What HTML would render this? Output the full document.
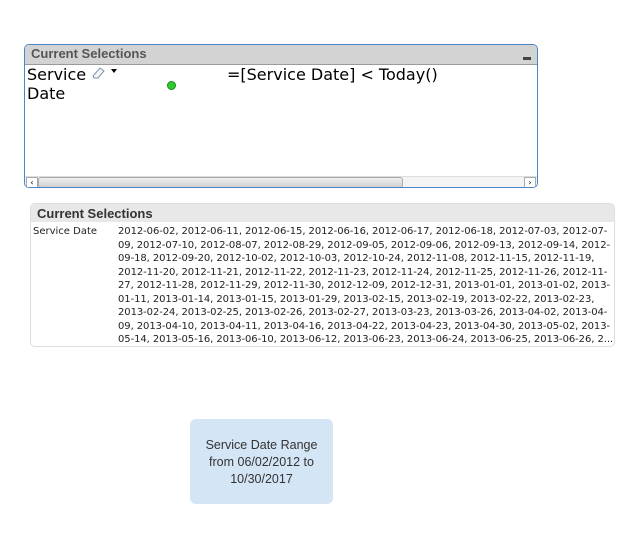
<!DOCTYPE html>
<html><head><meta charset="utf-8"><style>
body{margin:0;width:620px;height:543px;background:#fff;position:relative;font-family:"DejaVu Sans","Liberation Sans",sans-serif;overflow:hidden}
.p1{position:absolute;left:24px;top:44px;width:512px;height:142px;border:1px solid #4a86c8;border-radius:5px;overflow:hidden;background:#fff}
.h1{height:19px;background:#d3d3d3;border-bottom:1px solid #9a9a9a;font-size:13px;font-weight:bold;color:#555;padding-left:6px;line-height:18px;font-family:"Liberation Sans",sans-serif}
.min{position:absolute;right:6px;top:12px;width:8px;height:3px;background:#444}
.t{position:absolute;font-size:16px;color:#000;font-family:"DejaVu Sans",sans-serif}
.sb{position:absolute;left:0;top:131px;width:512px;height:11px;background:#f4f4f4;border-top:1px solid #ddd}
.p2{position:absolute;left:30px;top:203px;width:583px;height:142px;border:1px solid #ddd;border-radius:5px;overflow:hidden}
.h2{height:18px;background:#e8e8e8;font-size:13px;font-weight:bold;color:#333;padding-left:6px;line-height:19px;font-family:"Liberation Sans",sans-serif}
.lines{position:absolute;left:87px;top:21px;font-size:10px;line-height:13.5px;color:#222;white-space:pre;letter-spacing:-0.08px}
.bx{position:absolute;left:190px;top:419px;width:143px;height:85px;background:#d4e5f6;border-radius:6px;font-size:12.5px;color:#333;text-align:center;line-height:17px;font-family:"Liberation Sans",sans-serif}
</style></head><body>
<div class="p1">
<div class="h1">Current Selections</div>
<div class="min"></div>
<div class="t" style="left:2px;top:20px">Service</div>
<div class="t" style="left:2px;top:39px">Date</div>
<svg style="position:absolute;left:66px;top:20px" width="30" height="14"><path d="M2 11 L9 3 L13 6 L7 13 L3 13 Z" fill="#f4f6fa" stroke="#7f8fb0"/><path d="M20 4 L26 4 L23 8 Z" fill="#000"/></svg>
<div style="position:absolute;left:142px;top:36px;width:7px;height:7px;border-radius:50%;background:#2ecc2e;border:1px solid #1a8a1a"></div>
<div class="t" style="left:202px;top:20px">=[Service Date] &lt; Today()</div>
<div class="sb">
<div style="position:absolute;left:1px;top:0;width:10px;height:9px;border:1px solid #aaa;background:#fff;font-size:8px;line-height:9px;text-align:center">‹</div>
<div style="position:absolute;left:13px;top:0;width:363px;height:9px;border:1px solid #aaa;border-radius:3px;background:linear-gradient(#f0f0f0,#d0d0d0)"></div>
<div style="position:absolute;left:499px;top:0;width:10px;height:9px;border:1px solid #aaa;background:#fff;font-size:8px;line-height:9px;text-align:center">›</div>
</div>
</div>
<div class="p2">
<div class="h2">Current Selections</div>
<div style="position:absolute;left:2px;top:21px;font-size:10px;color:#222;line-height:13.5px">Service Date</div>
<div class="lines">2012-06-02, 2012-06-11, 2012-06-15, 2012-06-16, 2012-06-17, 2012-06-18, 2012-07-03, 2012-07-
09, 2012-07-10, 2012-08-07, 2012-08-29, 2012-09-05, 2012-09-06, 2012-09-13, 2012-09-14, 2012-
09-18, 2012-09-20, 2012-10-02, 2012-10-03, 2012-10-24, 2012-11-08, 2012-11-15, 2012-11-19,
2012-11-20, 2012-11-21, 2012-11-22, 2012-11-23, 2012-11-24, 2012-11-25, 2012-11-26, 2012-11-
27, 2012-11-28, 2012-11-29, 2012-11-30, 2012-12-09, 2012-12-31, 2013-01-01, 2013-01-02, 2013-
01-11, 2013-01-14, 2013-01-15, 2013-01-29, 2013-02-15, 2013-02-19, 2013-02-22, 2013-02-23,
2013-02-24, 2013-02-25, 2013-02-26, 2013-02-27, 2013-03-23, 2013-03-26, 2013-04-02, 2013-04-
09, 2013-04-10, 2013-04-11, 2013-04-16, 2013-04-22, 2013-04-23, 2013-04-30, 2013-05-02, 2013-
05-14, 2013-05-16, 2013-06-10, 2013-06-12, 2013-06-23, 2013-06-24, 2013-06-25, 2013-06-26, 2...</div>
</div>
<div class="bx"><div style="padding-top:18px">Service Date Range<br>from 06/02/2012 to<br>10/30/2017</div></div>
</body></html>
